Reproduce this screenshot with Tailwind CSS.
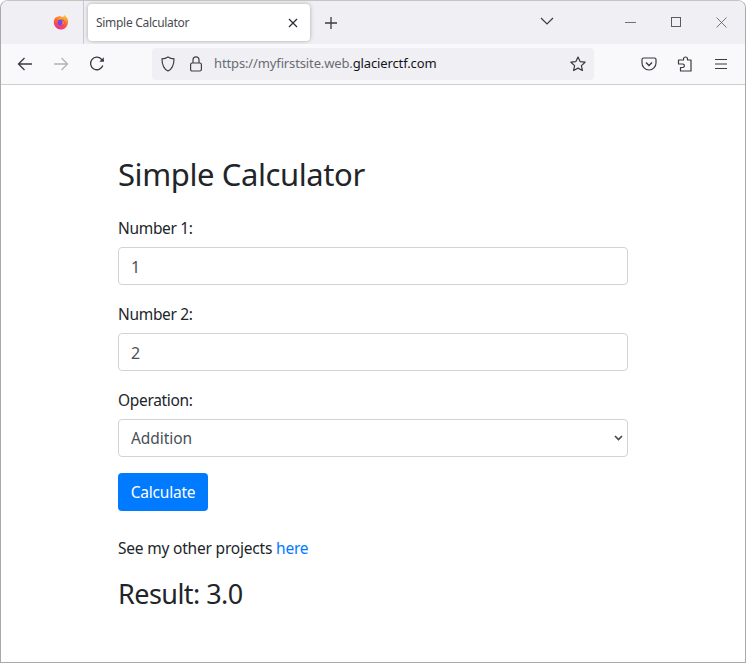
<!DOCTYPE html>
<html lang="en">
<head>
  <meta charset="UTF-8">
  <title>Simple Calculator</title>
  <script src="https://cdn.jsdelivr.net/npm/@tailwindcss/browser@4"></script>
</head>
<body class="bg-white font-['Noto_Sans',sans-serif] text-[#212529] overflow-hidden">
  <div class="w-[746px] h-[663px] flex flex-col border border-[#a9a9a9] border-t-[#c4c4c4] rounded-t-lg overflow-hidden">

    <!-- tab bar -->
    <div class="h-[43px] shrink-0 bg-[#f0f0f4] flex">
      <div class="w-[83px] shrink-0 flex justify-end items-center pr-[14px] pb-[2px] border-r border-[#c9c9cd]">
        <svg width="16" height="16" viewBox="0 0 16 16">
          <defs>
            <linearGradient id="ff" x1="0.700" y1="0" x2="0.300" y2="1">
              <stop offset="0" stop-color="#ffd23f"/>
              <stop offset=".45" stop-color="#ff6a2a"/>
              <stop offset="1" stop-color="#ee2a8f"/>
            </linearGradient>
          </defs>
          <path d="M11.500 .5c.4 1.500 2.600 2.500 3.200 4.500 1.200 3.900-.7 10.500-6.700 10.500C3.900 15.500 .8 12.300 .8 8.300c0-2 .8-3.800 2.100-5.100.3-.3.7-.1.8.3.6-.7 1.600-1.200 2.600-1.400.9-.2 1.800.6 2.400.8 1.300.4 2.700-.7 2.800-2.400z" fill="url(#ff)"/>
          <circle cx="8" cy="8.500" r="3.300" fill="#7b46e8"/>
          <path d="M4.600 5.400c1.700-1.700 5-1.800 6.300.4-1.400-.8-2.800-.8-4-.3z" fill="#ffa930"/>
          <path d="M8.600 6.300c1.500-.1 2.800 1 2.600 2.500-.2 1.600-1.800 2.500-3.200 2.200 1.600-.3 2-3.200.6-4.700z" fill="#ff8a1a"/>
        </svg>
      </div>
      <div class="ml-[4px] mt-[3px] w-[222px] h-[37px] bg-white rounded-[4px] shadow-[0_0_4px_rgba(0,0,0,0.3)] flex items-center justify-between pl-[8px] pr-[11px]">
        <span class="text-[12px] tracking-[-0.3px] text-[#4a4a50]">Simple Calculator</span>
        <svg width="12" height="12" viewBox="0 0 12 12" fill="none" stroke="#2b2a33" stroke-width="1.200"><path d="M2 2l8 8M10 2l-8 8"/></svg>
      </div>
      <div class="ml-[14px] mt-[15px] h-[16px]">
        <svg width="14" height="14" viewBox="0 0 14 14" fill="none" stroke="#3a3a40" stroke-width="1.300"><path d="M7 1v12M1 7h12"/></svg>
      </div>
      <div class="ml-[202px] mt-[16px] h-[10px]">
        <svg width="14" height="9" viewBox="0 0 14 9" fill="none" stroke="#3a3a40" stroke-width="1.200"><path d="M1 1l6 6 6-6"/></svg>
      </div>
      <div class="ml-[71px] mt-[21px] w-[11px] h-px bg-[#6f6f74]"></div>
      <div class="ml-[35px] mt-[16px] w-[10px] h-[10px] border border-[#5a5a60]"></div>
      <div class="ml-[35px] mt-[16px] h-[11px]">
        <svg width="11" height="11" viewBox="0 0 11 11" fill="none" stroke="#66666b" stroke-width=".9"><path d="M.5.500l10 10M10.500.500l-10 10"/></svg>
      </div>
    </div>

    <!-- toolbar -->
    <div class="h-[41px] shrink-0 bg-[#f9f9fb] border-b border-[#cfcfd3] flex items-center">
      <svg class="ml-[16px]" width="16" height="16" viewBox="0 0 16 16" fill="none" stroke="#3a3a40" stroke-width="1.300"><path d="M15 8H1.500M7.500 2L1.500 8l6 6"/></svg>
      <svg class="ml-[20px]" width="16" height="16" viewBox="0 0 16 16" fill="none" stroke="#b3b3b8" stroke-width="1.300"><path d="M1 8h13.500M8.500 2l6 6-6 6"/></svg>
      <svg class="ml-[20px]" width="16" height="16" viewBox="0 0 16 16" fill="none" stroke="#3a3a40" stroke-width="1.300"><path d="M13.800 9.500A6.300 6.300 0 1 1 12.500 3.200L14.500 5"/><path d="M14.800 1.200v4.500h-4.500" fill="#3a3a40" stroke="none"/></svg>
      <div class="ml-[47px] w-[442px] h-[32px] rounded-[4px] bg-[#f0f0f4] flex items-center">
        <svg class="ml-[8px]" width="16" height="16" viewBox="0 0 16 16" fill="none" stroke="#3f3f45" stroke-width="1.200"><path d="M8 1c1.800 1.200 3.800 1.800 6 1.900 0 5.300-1.600 9.900-6 12.100C3.600 12.800 2 8.200 2 2.900 4.200 2.800 6.200 2.200 8 1z"/></svg>
        <svg class="ml-[13px]" width="14" height="16" viewBox="0 0 14 16" fill="none" stroke="#3f3f45" stroke-width="1.200"><rect x="1.600" y="7" width="10.800" height="8" rx="1.500"/><path d="M4 7V3.800a3 3 0 0 1 6 0V7"/></svg>
        <span class="ml-[11px] text-[13px] tracking-[-0.13px] text-[#6b6b72]">https://myfirstsite.web.<span class="text-[#15141a]">glacierctf.com</span></span>
        <svg class="ml-auto mr-[8px]" width="16" height="16" viewBox="0 0 16 16" fill="none" stroke="#3a3a40" stroke-width="1.200" stroke-linejoin="round"><path d="M8 1l2.100 4.600 5 .6-3.700 3.400 1 4.900L8 12.100 3.600 14.500l1-4.900L.9 6.200l5-.6z"/></svg>
      </div>
      <svg class="ml-[47px]" width="16" height="16" viewBox="0 0 16 16" fill="none" stroke="#3a3a40" stroke-width="1.200"><path d="M2.500 2h11A1.500 1.500 0 0 1 15 3.500V7a7 7 0 0 1-14 0V3.500A1.500 1.500 0 0 1 2.500 2z"/><path d="M5 6.500l3 3 3-3" stroke-width="1.400"/></svg>
      <svg class="ml-[20px]" width="16" height="16" viewBox="0 0 16 16" fill="none" stroke="#3a3a40" stroke-width="1.200" stroke-linejoin="round"><path d="M6.500 4V3a2 2 0 0 1 4 0v1H14v11H3.500v-3.500H6a1.800 1.800 0 0 0 0-3.500H1.500V4z"/></svg>
      <svg class="ml-[21px]" width="14" height="12" viewBox="0 0 14 12" fill="none" stroke="#3a3a40" stroke-width="1.200"><path d="M1 1.500h12M1 6h12M1 10.500h12"/></svg>
    </div>

    <!-- page -->
    <main class="flex-1 bg-white pl-[117px] w-[627px]">
      <h1 class="mt-[66px] mb-[18px] text-[31px] leading-[46px] tracking-[-0.41px]">Simple Calculator</h1>
      <div class="mb-[16px]">
        <label class="block pt-[1px] text-[15.500px] leading-[24px] tracking-[-0.32px] mb-[7px]">Number 1:</label>
        <input type="text" value="1" class="block w-full h-[38px] px-[12px] pt-[1px] border border-[#ced4da] rounded-[4px] text-[16px] text-[#495057]">
      </div>
      <div class="mb-[16px]">
        <label class="block pt-[1px] text-[15.500px] leading-[24px] tracking-[-0.32px] mb-[7px]">Number 2:</label>
        <input type="text" value="2" class="block w-full h-[38px] px-[12px] pt-[1px] border border-[#ced4da] rounded-[4px] text-[16px] text-[#495057]">
      </div>
      <div class="mb-[16px]">
        <label class="block pt-[1px] text-[15.500px] leading-[24px] tracking-[-0.32px] mb-[7px]">Operation:</label>
        <div class="relative">
          <select class="block w-full h-[38px] pl-[12px] pt-[2px] border border-[#ced4da] rounded-[4px] bg-white text-[15.500px] tracking-[-0.05px] text-[#495057] appearance-none">
            <option>Addition</option>
          </select>
          <svg class="absolute right-[5px] top-[16px]" width="9" height="7" viewBox="0 0 9 7" fill="none" stroke="#4a4a4f" stroke-width="1.700"><path d="M1 1l3.500 3.500L8 1"/></svg>
        </div>
      </div>
      <button class="block w-[90px] h-[38px] pt-[2px] rounded-[4px] bg-[#007bff] text-white text-[15.500px] tracking-[-0.2px]">Calculate</button>
      <p class="mt-[25px] text-[15.500px] leading-[24px] tracking-[-0.2px]">See my other projects <a href="#" class="text-[#007bff]">here</a></p>
      <h3 class="mt-[13px] text-[27px] leading-[42px] tracking-[-0.55px]">Result: 3.0</h3>
    </main>
  </div>
</body>
</html>
